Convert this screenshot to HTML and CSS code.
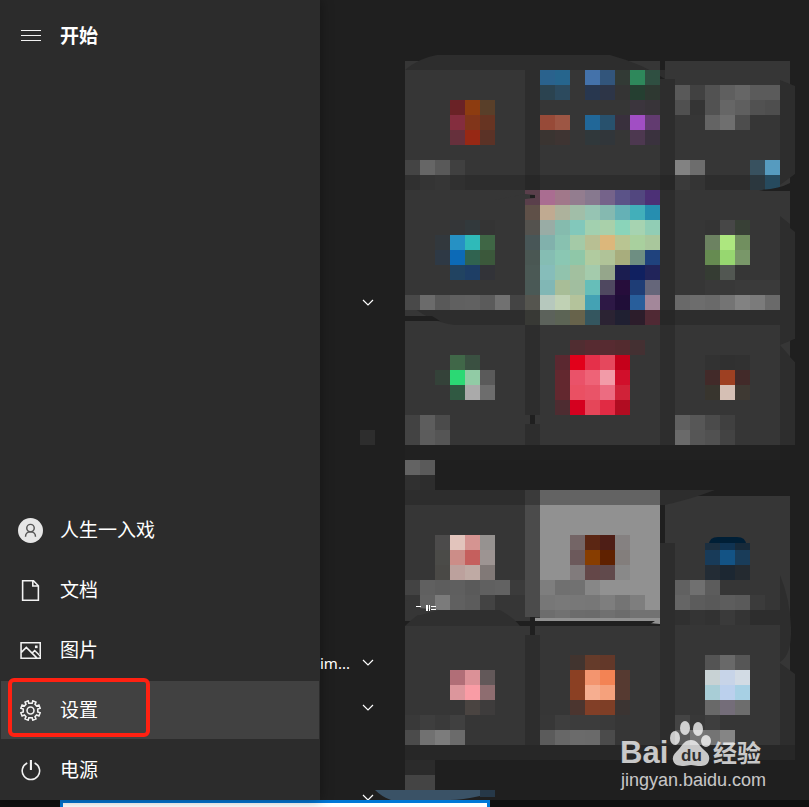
FILE: index.html
```html
<!DOCTYPE html>
<html lang="zh-CN">
<head>
    <meta charset="UTF-8">
    <meta name="viewport" content="width=device-width, initial-scale=1.0">
    <title>开始</title>
    <link rel="stylesheet" href="styles.css">
</head>
<body>
    <div class="start">
        <nav class="menu">
            <button class="menu-header">
                <svg class="icon lines" viewBox="0 0 21 21"><path d="M1 5.5h20M1 10.5h20M1 15.5h20"/></svg>
                <span>开始</span>
            </button>
            <ul class="menu-list">
                <li><button class="menu-item">
                    <svg class="icon avatar" viewBox="0 0 26 26"><circle class="avatar-bg" cx="13" cy="13" r="13"/><circle cx="13" cy="10.5" r="3.9"/><path d="M7.8 19.5c0-3.3 2.2-5.1 5.2-5.1s5.2 1.8 5.2 5.1"/></svg>
                    <span>人生一入戏</span>
                </button></li>
                <li><button class="menu-item">
                    <svg class="icon" viewBox="0 0 20 20"><path d="M2.5.7h10.3l4.7 4.8v13.8h-15zM12.2.7v5h5"/></svg>
                    <span>文档</span>
                </button></li>
                <li><button class="menu-item">
                    <svg class="icon" viewBox="0 0 20 20"><path d="M1 2.7h18.3v14.6H1zM1 12l5-5 10 10M11.5 12.5l2.5-2.5 5 5"/><path d="M15 6h1v1h-1z"/></svg>
                    <span>图片</span>
                </button></li>
                <li><button class="menu-item active">
                    <svg class="icon" viewBox="0 0 20 20"><circle cx="10" cy="10" r="3.3"/><path d="M8.4 3.1 7.8.8 4.8 2l.9 2.2-1.5 1.5L2 4.8.8 7.8l2.3.9v2.6l-2.3.9 1.2 3 2.2-.9 1.5 1.5-.9 2.2 3 1.2.6-2.3h3.2l.6 2.3 3-1.2-.9-2.2 1.5-1.5 2.2.9 1.2-3-2.3-.9V8.7l2.3-.9-1.2-3-2.2.9-1.5-1.5.9-2.2-3-1.2-.6 2.3z"/></svg>
                    <span>设置</span>
                </button></li>
                <li><button class="menu-item">
                    <svg class="icon" viewBox="0 0 20 20"><path d="M6.9 2.8a8.3 8.3 0 1 0 7 0"/><path class="thick" d="M10.4 0v9.5"/></svg>
                    <span>电源</span>
                </button></li>
            </ul>
            <div class="marker"></div>
        </nav>

        <ul class="apps">
            <li><button class="expand" aria-label="展开"><svg viewBox="0 0 12 8"><path d="M1 1l5 5 5-5"/></svg></button></li>
            <li></li>
            <li></li>
            <li><span class="letter"></span></li>
            <li></li>
            <li></li>
            <li></li>
            <li></li>
            <li><span class="app-name">im...</span><button class="expand" aria-label="展开"><svg viewBox="0 0 12 8"><path d="M1 1l5 5 5-5"/></svg></button></li>
            <li><button class="expand" aria-label="展开"><svg viewBox="0 0 12 8"><path d="M1 1l5 5 5-5"/></svg></button></li>
            <li></li>
            <li><button class="expand" aria-label="展开"><svg viewBox="0 0 12 8"><path d="M1 1l5 5 5-5"/></svg></button></li>
        </ul>

        <main class="tiles">
            <svg class="mosaic" viewBox="0 0 390 745">
                <!-- first group -->
                <path fill="#363636" d="M0 6h255v384H0zM260 6h125v384H260z"/>
                <path fill="#2d2d2d" d="M0 15Q14 3 32 0H205Q238 9 260 24V15z"/>
                <path fill="#2d2d2d" d="M120 15h15v375h-15zM255 24h15v366h-15zM0 120h375v15H0zM0 255h375v15H0z"/>
                <path fill="#2d2d2d" d="M375 25l15 6v88l-15 11zM375 161l15 12v111l-15 6zM375 290l15 17v83h-15z"/>
                <path fill="#1f1f1f" d="M385 131V173l5 4v-58zM385 286l5-2v23l-5-5z"/>
                <path fill="#272727" d="M120 120h15v15h-15zM255 120h15v15h-15zM255 255h15v15h-15z"/>
                <path fill="#363636" d="M0 245q22 22 50 25H0zM120 360h15v9h-15z"/>
                <path fill="#1f1f1f" d="M0 261h27l8 5H0zM125 360h5v9h-5z"/>
                <path fill="#212121" d="M0 390h375v15H0z"/>
                <!-- second group -->
                <path fill="#363636" d="M0 450h135v255H0zM135 571h125v134H135zM260 441h125v264H260z"/>
                <path fill="#2d2d2d" d="M0 435h120v15H0zM255 435h55q-26 10-55 16zM120 580h15v125h-15zM255 488h15v217h-15zM270 555h105v15H270z"/>
                <path fill="#2d2d2d" d="M375 520q10 24 11 52t-11 35zM375 608l15 11v71h-15z"/>
                <path fill="#3a3a3a" d="M120 435h15v15h-15z"/>
                <path fill="#4b4b4b" d="M120 450h15v112h-15z"/>
                <path fill="#636363" d="M135 435h120v15H135z"/>
                <path fill="#919191" d="M135 450h120v119l-36-3h-89v-3h5z"/>
                <path fill="#1f1f1f" d="M255 450h5v38h-5zM0 566h250l-8 5H0zM125 562h5v18h-5z"/>
                <path fill="#2f2f2f" d="M0 571q12-12 22-16h73q14 8 20 16z"/>
                <path fill="#272727" d="M0 690h390v15H0z"/>
                <path fill="#001f36" d="M304 494v-4q0-8 9-8h19q9 0 9 8v4z"/>
                <!-- third group -->
                <path fill="#3a5266" d="M-30 735H75v6q-18 4-30 4H-14q-9-3-16-10z"/>
                <path fill="#263848" d="M75 735h15v7H75z"/>
                <g id="pixels"></g>
                <!-- pieces of the tiles that stay visible over the blocks -->
                <path fill="#363636" d="M0 544l14 9 20 2-18 5H0z"/>
                <path fill="#1f1f1f" d="M354 135q20-1 31-7h5v8h-31z"/>
                <path fill="#363636" d="M90 145l30-6 10 1v3l-10 1v3H90z"/>
                <path fill="#1f1f1f" d="M125 140h5v3h-5z"/>
                <path fill="#fff" d="M11 551h5v1h-5zM21 550h2v6h-2zM24 550h1v6h-1zM26 551h5v1h-5zM26 554h5v1h-5z"/>
            </svg>
        </main>
    </div>

    <div class="taskbar">
        <input class="search" type="text" aria-label="搜索">
    </div>

    <svg class="watermark" viewBox="0 0 150 74">
        <text class="brand" x="-1" y="44">Bai</text>
        <g class="paw">
            <ellipse cx="54" cy="19" rx="5" ry="7"/>
            <ellipse cx="64" cy="9" rx="5" ry="7"/>
            <ellipse cx="77" cy="10" rx="5" ry="7"/>
            <ellipse cx="85" cy="22" rx="5" ry="6"/>
            <path d="M70 21c6 0 8 5 12 9 5 4 7 7 6 11-1 6-6 6-11 6-3 0-4-1-7-1s-4 1-7 1c-6 0-10-1-11-6-1-4 2-7 6-11 4-5 6-9 12-9z"/>
        </g>
        <text class="du" x="60" y="42">du</text>
        <text class="cn" x="92" y="43">经验</text>
        <text class="url" x="0" y="67">jingyan.baidu.com</text>
    </svg>

    <script src="tiles.js"></script>
</body>
</html>
```
FILE: styles.css
```css
* {
    margin: 0;
    padding: 0;
    box-sizing: border-box;
    font-family: 'Noto Sans', 'Noto Sans CJK SC', sans-serif;
}

body {
    display: flex;
    flex-direction: column;
    height: 100vh;
    background-color: #1f1f1f;
    color: #fff;
    overflow: hidden;
}

button {
    background: none;
    border: none;
    color: inherit;
}

ul {
    list-style: none;
}

.start {
    flex: 1;
    min-height: 0;
    display: grid;
    grid-template-columns: 320px 85px 1fr;
    grid-template-rows: 100%;
}

/* left menu */
.menu {
    position: relative;
    display: flex;
    flex-direction: column;
    justify-content: space-between;
    background-color: #2c2c2c;
    box-shadow: 0 0 12px rgba(0, 0, 0, 0.4);
}

.menu-header,
.menu-item {
    display: flex;
    align-items: center;
    gap: 19px;
    width: 100%;
    padding: 0 20px;
    font-family: 'Noto Sans CJK SC', sans-serif;
    font-size: 19px;
    line-height: 28px;
    text-align: left;
}

.menu-header {
    height: 71px;
    font-weight: bold;
}

.menu-list li {
    height: 60px;
    padding: 1px;
}

.menu-item {
    height: 58px;
    padding: 0 19px;
}

.menu-item.active {
    background-color: #414141;
}

.icon {
    width: 21px;
    height: 21px;
    flex: none;
    fill: none;
    stroke: #f2f2f2;
    stroke-width: 1.5;
}

.icon.lines {
    stroke-width: 1;
}

.icon .thick {
    stroke-width: 2;
}

.icon.avatar {
    width: 25px;
    height: 25px;
    margin: 0 -2px;
    stroke: #555;
}

.avatar-bg {
    fill: #e6e6e6;
    stroke: none;
}

.marker {
    position: absolute;
    left: 8px;
    bottom: 63px;
    width: 142px;
    height: 59px;
    border: 4px solid #ff2112;
    border-radius: 6px;
    pointer-events: none;
}

/* app list */
.apps {
    padding-top: 280px;
    overflow: hidden;
}

.apps li {
    position: relative;
    z-index: 1;
    display: flex;
    align-items: center;
    justify-content: flex-end;
    height: 45px;
    padding-right: 30px;
}

.app-name {
    flex: 1;
    font-size: 15px;
    line-height: 20px;
}

.expand {
    width: 13px;
    height: 14px;
}

.expand svg {
    display: block;
    width: 12px;
    height: 8px;
    margin: 2px 0;
    fill: none;
    stroke: #fff;
    stroke-width: 1.2;
}

.letter {
    width: 15px;
    height: 15px;
    background-color: #2d2d2d;
}

/* tiles */
.tiles {
    padding-top: 55px;
}

.mosaic {
    display: block;
    width: 390px;
    height: 745px;
    overflow: visible;
}

#pixels {
    shape-rendering: crispEdges;
}

/* taskbar */
.taskbar {
    height: 7px;
    padding-left: 60px;
    background-color: #101010;
    overflow: hidden;
}

.search {
    display: block;
    width: 430px;
    height: 40px;
    background-color: #fff;
    border: 3px solid #0078d7;
    outline: none;
}

/* watermark */
.watermark {
    position: absolute;
    right: 38px;
    bottom: 14px;
    width: 150px;
    height: 74px;
    fill: #fff;
    opacity: 0.75;
    overflow: visible;
}

.watermark .brand {
    font: bold 31px 'Liberation Sans', sans-serif;
}

.watermark .du {
    font: bold 17px 'Liberation Sans', sans-serif;
    fill: #333;
}

.watermark .cn {
    font: bold 24px 'Noto Sans CJK SC', sans-serif;
}

.watermark .url {
    font: 18px 'Liberation Sans', sans-serif;
}
```
FILE: tiles.js
```js
// [column, row, colours from left to right], '-' leaves a cell empty
const CELL = 15;
const runs = [
    // row 1
    [3, 3, '6a2226 8d3c10 593f29'],
    [3, 4, '842d3e 81351a 673422'],
    [3, 5, '66303c 972814 5b3226'],
    [0, 7, '444444 666666 595959 404040'],
    [0, 8, '303030 343434 363636 303030'],
    [9, 1, '2a628d 26658d - 4472aa 32557b 323a35 2e885b 2f4f41'],
    [9, 2, '2b4350 2c4a5e - 28374f 2d3547 343434 253f31 2e3831'],
    [15, 3, '3b353d 383439'],
    [9, 4, '974a38 9d5644 - 216798 28516d 39303d a14ec4 623b70'],
    [9, 5, '3a3431 3e3432 - 30383b 31363a - 4d3850 3a323e'],
    [18, 2, '595959 414141 525252 5f5f5f 666666 5b5b5b 5b5b5b'],
    [18, 3, '505050 343434 525252 666666 5f5f5f 515151 4e4e4e'],
    [20, 4, '646464 6f6f6f 4d4d4d'],
    [18, 7, '828282 6d6d6d - - - 38515f 569bbf'],
    [18, 8, '3a3a3a 343434 - - - 2b373e 264a5e'],
    // row 2
    [3, 11, '343638 32393c 343434'],
    [2, 12, '32383d 2691c4 2fbab9 3f6645'],
    [2, 13, '2e3945 0c6ab7 306350 3b583b'],
    [3, 14, '214361 1e3e65 323338'],
    [0, 16, '494949 6b6b6b 595959 606060 616161 5b5b5b 717171 444444'],
    [8, 9, '5a3f4b aa6d91 a1788a 937d8f 87798f 75638a 5b5388 52477f 4c3076'],
    [8, 10, '5f5048 c0aa91 adb29c a1bea8 96c4b3 85b9b0 65b1b6 42afba 268eb0'],
    [8, 11, '54524e 99aca5 85bbae 82c8bb a2d0af a9d0aa 8ad4ba a6d3b1 91cdb5'],
    [8, 12, '485657 81b1ac 88c1b0 a4caa7 b8bf93 dcb77b b9c592 a9d09e a9c79c'],
    [8, 13, '4a5753 85bdb3 8ac7b3 8fc7a8 b1cb9f b0c398 a8ad7d 6e8e82 1f427d'],
    [8, 14, '4b5955 86bdba 91c3ad a2c09f a4cbac 95a68b 1b1d50 102060 21245a'],
    [8, 15, '4a5956 81b7b5 a8bd97 a1be9f 66beb9 4f4860 260d3b 1e3d76 65667a'],
    [8, 16, '55554f b6c8bd c0d1b4 b4c39b 44a2b4 2d1845 200e38 285e9b a3879a'],
    [8, 17, '383935 5c625b 5c6455 67634b 34565f 2b2333 202032 2c1d2b 502934'],
    [20, 11, '343434 474747 384036'],
    [20, 12, '6c8261 ade77f 718f5f'],
    [20, 13, '668b51 97d770 799769'],
    [20, 14, '353c33 525752 363636'],
    [20, 15, '393939 383838 3a3a3a 3a3a3a 3a3a3a'],
    [18, 16, '696969 6d6d6d 6a6a6a 747474 828282 7b7b7b 6a6a6a'],
    // row 3
    [3, 20, '406748 3a5041'],
    [2, 21, '344239 2bd974 91cba5 5a5a5a'],
    [3, 22, '305942 aaaaaa 6d6d6d'],
    [0, 24, '424242 5d5d5d 4b4b4b'],
    [0, 25, '434343 5c5c5c 555555'],
    [11, 19, '502d31 572b31 572b31 532b2f 443032'],
    [10, 20, '5b2830 e2001a e5304a e5485d c5001a'],
    [10, 21, '63282f ea5269 ee6377 f29ba8 d10f2b'],
    [10, 22, '63282f ea5063 e95468 ec6c81 d02238'],
    [10, 23, '4e2c31 d5001f e54659 e12b44 b10c21'],
    [20, 20, '323232 303030 313131'],
    [20, 21, '422a29 9e4022 422a29'],
    [20, 22, '38352e d5bfb4 3e3933'],
    [18, 24, '606060 575757 4b4b4b 404040'],
    [18, 25, '6a6a6a 565656 515151 434343'],
    // group name
    [0, 27, '636363 5a5a5a'],
    [0, 28, '303030 2d2d2d'],
    // row 4
    [2, 32, '4c4b4b e2c4bc d59491 969290'],
    [2, 33, '4b4b48 cc8d88 c55f5d 9d9492'],
    [2, 34, '4a4946 bca19d bfaaa4 817977'],
    [0, 35, '434343 606060 5d5d5d 5f5f5f 5a5a5a 606060 626262 3b3b3b'],
    [1, 36, '626262 7b7b7b 606060 5c5c5c 434343'],
    [11, 32, '746566 5b2613 4e1e16 858181'],
    [11, 33, '6c595b 873d00 5f2100 837e7c'],
    [11, 34, '817b7c 644748 614a4c 898989'],
    [9, 35, '7e7e7e 707070 717171 878787'],
    [9, 36, '777777 797979 787878 777777 7e7e7e 747474 7e7e7e'],
    [9, 37, '6d6d6d 717171 6c6c6c 6b6b6b 707070 6c6c6c 727272 727272'],
    [20, 32, '1b2f40 0f3352 172a3a'],
    [20, 33, '183b59 135385 193c59'],
    [20, 34, '232c35 1c2732 242a30'],
    [18, 35, '616161 707070 5c5c5c'],
    [18, 36, '656565 5c5c5c 595959 5d5d5d 5a5a5a 3b3b3b'],
    [18, 37, '303030 343434 323232 3a3a3a 343434'],
    // row 5
    [3, 41, 'b16e77 db9197 625859'],
    [3, 42, 'dc969c f99ca5 8e6d70'],
    [4, 43, '4a4441 3e3c3c'],
    [0, 44, '393939 3e3e3e 3a3a3a 404040'],
    [0, 45, '4b4b4b 717171 7c7c7c 6b6b6b'],
    [11, 40, '41342f 653b2a 633829'],
    [11, 41, '8b4023 f3956f f38354 563a31'],
    [11, 42, '8b4023 f6ae90 f5a17c 563a31'],
    [11, 43, '4b352f 823f27 7e3e26 3b3432'],
    [9, 44, '373737 3e3e3e 3c3c3c 3c3c3c 3a3a3a'],
    [9, 45, '5b5b5b 676767 6b6b6b 6a6a6a 4b4b4b'],
    [20, 40, '545454 696969 565656'],
    [20, 41, 'c8d2d4 c7d4e8 d2dbe4'],
    [20, 42, 'a8cdd6 bbd0ed a7d0e4'],
    [20, 43, '696969 746d79 6d6d6d'],
    [18, 44, '444444 383838 3e3e3e'],
    [18, 45, '5b5b5b 777777 747474 858585'],
    // last group name
    [0, 47, '2b2b2b 2b2b2b'],
    [0, 48, '444444 444444']
];

const layer = document.getElementById('pixels');

runs.forEach(([col, row, colors]) => {
    // cells on the lower edge of the wide tile and under the blue cap are cut
    const top = row === 32 && col === 20 ? 8 : 0;
    const bottom = row === 37 && col === 9 ? 7 : 0;

    colors.split(' ').forEach((color, i) => {
        if (color === '-') return;
        const rect = document.createElementNS('http://www.w3.org/2000/svg', 'rect');
        rect.setAttribute('x', (col + i) * CELL);
        rect.setAttribute('y', row * CELL + top);
        rect.setAttribute('width', CELL);
        rect.setAttribute('height', CELL - top - bottom);
        rect.setAttribute('fill', '#' + color);
        layer.appendChild(rect);
    });
});
```
